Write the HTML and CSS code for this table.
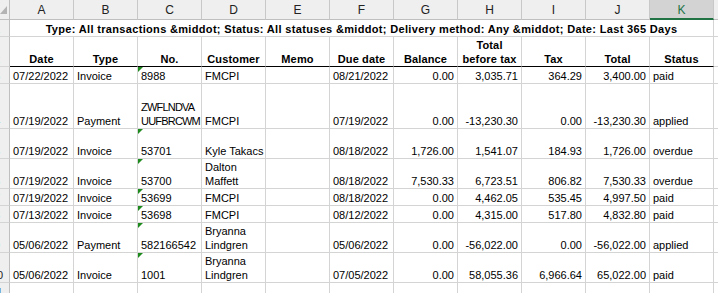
FILE: index.html
```html
<!DOCTYPE html>
<html>
<head>
<meta charset="utf-8">
<link rel="stylesheet" href="styles.css">
</head>
<body>
<div class="sheet">
  <div class="corner"><svg width="9" height="19" viewBox="0 0 9 19"><polygon points="7,6 7,14 0,14" fill="#b4b4b4"/></svg></div>
  <div class="ch">A</div><div class="ch">B</div><div class="ch">C</div><div class="ch">D</div><div class="ch">E</div><div class="ch">F</div><div class="ch">G</div><div class="ch">H</div><div class="ch">I</div><div class="ch">J</div><div class="ch sel">K</div><div class="ch">L</div>

  <div class="rh"><span>1</span></div>
  <div class="c title">Type: All transactions &amp;middot; Status: All statuses &amp;middot; Delivery method: Any &amp;middot; Date: Last 365 Days</div>
  <div class="c"></div>

  <div class="rh"><span>2</span></div>
  <div class="c hd">Date</div><div class="c hd">Type</div><div class="c hd">No.</div><div class="c hd">Customer</div><div class="c hd">Memo</div><div class="c hd">Due date</div><div class="c hd">Balance</div><div class="c hd">Total<br>before tax</div><div class="c hd">Tax</div><div class="c hd">Total</div><div class="c hd">Status</div><div class="c"></div>

  <div class="rh"><span>3</span></div>
  <div class="c">07/22/2022</div><div class="c">Invoice</div><div class="c mk">8988</div><div class="c">FMCPI</div><div class="c"></div><div class="c">08/21/2022</div><div class="c r">0.00</div><div class="c r">3,035.71</div><div class="c r">364.29</div><div class="c r">3,400.00</div><div class="c">paid</div><div class="c"></div>

  <div class="rh"><span>4</span></div>
  <div class="c">07/19/2022</div><div class="c">Payment</div><div class="c tight">ZWFLNDVA<br>UUFBRCWM</div><div class="c">FMCPI</div><div class="c"></div><div class="c">07/19/2022</div><div class="c r">0.00</div><div class="c r">-13,230.30</div><div class="c r">0.00</div><div class="c r">-13,230.30</div><div class="c">applied</div><div class="c"></div>

  <div class="rh"><span>5</span></div>
  <div class="c">07/19/2022</div><div class="c">Invoice</div><div class="c mk">53701</div><div class="c">Kyle Takacs</div><div class="c"></div><div class="c">08/18/2022</div><div class="c r">1,726.00</div><div class="c r">1,541.07</div><div class="c r">184.93</div><div class="c r">1,726.00</div><div class="c">overdue</div><div class="c"></div>

  <div class="rh"><span>6</span></div>
  <div class="c">07/19/2022</div><div class="c">Invoice</div><div class="c mk">53700</div><div class="c">Dalton<br>Maffett</div><div class="c"></div><div class="c">08/18/2022</div><div class="c r">7,530.33</div><div class="c r">6,723.51</div><div class="c r">806.82</div><div class="c r">7,530.33</div><div class="c">overdue</div><div class="c"></div>

  <div class="rh"><span>7</span></div>
  <div class="c">07/19/2022</div><div class="c">Invoice</div><div class="c mk">53699</div><div class="c">FMCPI</div><div class="c"></div><div class="c">08/18/2022</div><div class="c r">0.00</div><div class="c r">4,462.05</div><div class="c r">535.45</div><div class="c r">4,997.50</div><div class="c">paid</div><div class="c"></div>

  <div class="rh"><span>8</span></div>
  <div class="c">07/13/2022</div><div class="c">Invoice</div><div class="c mk">53698</div><div class="c">FMCPI</div><div class="c"></div><div class="c">08/12/2022</div><div class="c r">0.00</div><div class="c r">4,315.00</div><div class="c r">517.80</div><div class="c r">4,832.80</div><div class="c">paid</div><div class="c"></div>

  <div class="rh"><span>9</span></div>
  <div class="c">05/06/2022</div><div class="c">Payment</div><div class="c mk">582166542</div><div class="c">Bryanna<br>Lindgren</div><div class="c"></div><div class="c">05/06/2022</div><div class="c r">0.00</div><div class="c r">-56,022.00</div><div class="c r">0.00</div><div class="c r">-56,022.00</div><div class="c">applied</div><div class="c"></div>

  <div class="rh"><span>10</span></div>
  <div class="c">05/06/2022</div><div class="c">Invoice</div><div class="c mk">1001</div><div class="c">Bryanna<br>Lindgren</div><div class="c"></div><div class="c">07/05/2022</div><div class="c r">0.00</div><div class="c r">58,055.36</div><div class="c r">6,966.64</div><div class="c r">65,022.00</div><div class="c">paid</div><div class="c"></div>

  <div class="rh"><span>11</span></div>
  <div class="c"></div><div class="c"></div><div class="c"></div><div class="c"></div><div class="c"></div><div class="c"></div><div class="c"></div><div class="c"></div><div class="c"></div><div class="c"></div><div class="c"></div><div class="c"></div>
</div>
</body>
</html>
```

FILE: styles.css
```css
html, body {
  margin: 0;
  padding: 0;
  background: #ffffff;
  overflow: hidden;
}

body {
  font-family: "Liberation Sans", Arial, sans-serif;
  font-size: 11px;
  color: #000000;
}

.sheet {
  display: grid;
  grid-template-columns: 10px repeat(12, 64px);
  grid-template-rows: 20px 17px 30px 17px 45px 30px 30px 17px 17px 30px 30px 17px;
  width: 778px;
}

.sheet > div {
  box-sizing: border-box;
}

.corner {
  background: #efefef;
  border-right: 1px solid #bfbfbf;
  border-bottom: 1px solid #bfbfbf;
  overflow: hidden;
}

.corner svg {
  display: block;
}

.ch {
  background: #efefef;
  border-right: 1px solid #c8c8c8;
  border-bottom: 1px solid #bfbfbf;
  display: flex;
  justify-content: center;
  align-items: flex-end;
  font-size: 12px;
  line-height: 17px;
  color: #222222;
}

.ch.sel {
  background: #d3d3d3;
  color: #217346;
  border-bottom: 2px solid #217346;
  line-height: 16px;
}

.rh {
  background: #efefef;
  border-right: 1px solid #bfbfbf;
  border-bottom: 1px solid #d4d4d4;
  display: flex;
  align-items: flex-end;
  overflow: hidden;
  line-height: 14px;
  color: #222222;
}

.rh span {
  flex: none;
  width: 20px;
  margin-left: -13px;
  text-align: center;
}

.c {
  position: relative;
  border-right: 1px solid #d4d4d4;
  border-bottom: 1px solid #d4d4d4;
  display: flex;
  align-items: flex-end;
  padding: 0 3px;
  line-height: 14px;
  white-space: nowrap;
}

.c.r {
  justify-content: flex-end;
  text-align: right;
}

.c.tight {
  letter-spacing: -0.8px;
}

.c.title {
  grid-column: span 11;
  justify-content: center;
  font-weight: bold;
  letter-spacing: 0.33px;
}

.c.hd {
  justify-content: center;
  text-align: center;
  font-weight: bold;
  letter-spacing: 0.15px;
  border-bottom: 1px solid #000000;
}

.c.mk::before {
  content: "";
  position: absolute;
  top: 0;
  left: 0;
  width: 0;
  height: 0;
  border-top: 5px solid #1e8a1e;
  border-right: 5px solid transparent;
}
```
